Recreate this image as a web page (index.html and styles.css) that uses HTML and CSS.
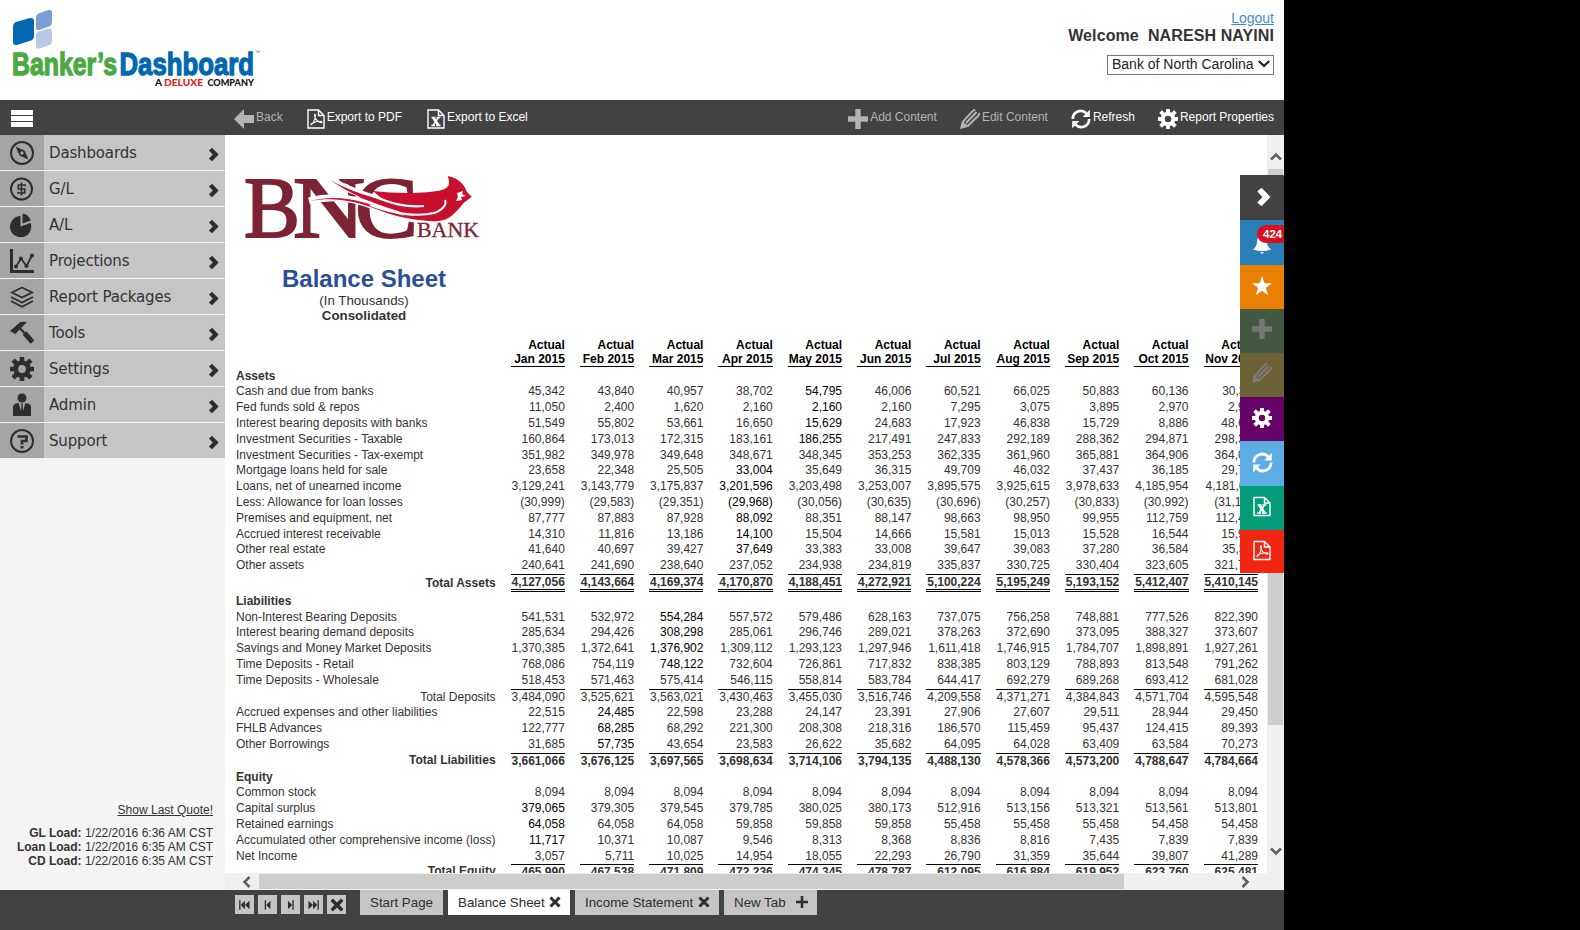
FILE: index.html
```html
<!DOCTYPE html>
<html lang="en">
<head>
<meta charset="utf-8">
<title>Banker's Dashboard</title>
<link rel="stylesheet" href="styles.css">
</head>
<body>
<svg class="defs" aria-hidden="true">
  <symbol id="chev" viewBox="0 0 12 16"><path d="M1 3.6 4.4.6 11.6 8 4.4 15.4 1 12.4 5.2 8Z" fill="currentColor"/></symbol>
  <symbol id="gear" viewBox="-12 -12 24 24"><circle r="6.3" fill="none" stroke="currentColor" stroke-width="4.800"/><path d="M0-12V-7M0 7V12M-12 0H-7M7 0H12M-8.9-8.9-5.5-5.5M8.9-8.9 5.5-5.5M-8.9 8.9-5.5 5.5M8.9 8.9 5.5 5.5" stroke="currentColor" stroke-width="4.600"/></symbol>
  <symbol id="refresh" viewBox="0 0 24 24"><path d="M2.2 12A9.4 9.4 0 0 1 18.5 5.4M21.8 12A9.4 9.4 0 0 1 5.5 18.6" fill="none" stroke="currentColor" stroke-width="3.200"/><path d="M22.600 1V9.600H14ZM1.400 23V14.400H10Z" fill="currentColor"/></symbol>
  <symbol id="xls" viewBox="0 0 18 20"><path d="M1 1H11.5L17 6.5V19H1ZM11.5 1V6.5H17" fill="none" stroke="currentColor" stroke-width="1.400"/><path d="M4.500 8.500H8.500M9.500 8.500H13.300M4.300 16.500H8M9 16.500H13.600" stroke="currentColor" stroke-width="1.300"/><path d="M6.200 8.500 11.600 16.500" stroke="currentColor" stroke-width="2.800"/><path d="M11.600 8.500 6 16.500" stroke="currentColor" stroke-width="1.500"/></symbol>
  <symbol id="pdf" viewBox="0 0 18 20"><path d="M1 1H11.5L17 6.5V19H1ZM11.500 1V6.500H17" fill="none" stroke="currentColor" stroke-width="1.400"/><path d="M3.500 16.300C6 15.500 8.600 10 8.400 6.200 8.300 4.600 7.200 5 7.500 6.800 8 10 11 13.400 14.300 13.600 15.500 13.500 15 12.200 13.500 12.200 10 12.200 6 13.600 3.800 15.300" fill="none" stroke="currentColor" stroke-width="1.100"/></symbol>
  <symbol id="plus" viewBox="0 0 20 20"><path d="M7.300 0H12.700V7.300H20V12.700H12.700V20H7.300V12.700H0V7.300H7.300Z" fill="currentColor"/></symbol>
  <symbol id="pencil" viewBox="0 0 20 20"><path d="M0 20 1.800 12.200 4 12.500 5 15 7.300 15.600 7.800 18Z" fill="currentColor"/><path d="M2.800 12.800 12 2.600Q13.500 1 15.300 1M6 14 16.600 3M7.500 17.300 18 7Q19.300 5.500 19 4" fill="none" stroke="currentColor" stroke-width="2"/></symbol>
  <symbol id="cross" viewBox="0 0 12 12"><path d="M1.500 1.500 10.500 10.500M10.500 1.500 1.500 10.500" stroke="currentColor" stroke-width="3"/></symbol>
</svg>

<div class="app">
  <header class="header">
    <svg class="logo" width="270" height="90" viewBox="0 0 270 90">
      <path d="M16 22 30 18Q34 17.500 34 21V36Q34 39 31 40.500L17 45Q13 45.500 13 42V27Q13 23 16 22Z" fill="#0067b2"/>
      <path d="M38.500 13.500 48.500 10Q52 9.500 52 12.500V22Q52 25 49.500 26.200L39.500 30Q36 30.500 36 27.500V17Q36 14.500 38.500 13.500Z" fill="#7c9dd2"/>
      <path d="M38.500 31.500 48.500 28.500Q52 28 52 31V41Q52 44 49.500 45L39.500 48.500Q36 49 36 46V35Q36 32.500 38.500 31.500Z" fill="#b8c9e6"/>
      <text class="logo-word logo-green" x="12" y="74.500" textLength="105" lengthAdjust="spacingAndGlyphs">Banker’s</text>
      <text class="logo-word logo-blue" x="119.500" y="74.500" textLength="134.500" lengthAdjust="spacingAndGlyphs">Dashboard</text>
      <text class="logo-tm" x="255" y="54">™</text>
      <text class="logo-sub" x="155" y="86" textLength="7" lengthAdjust="spacingAndGlyphs">A</text>
      <text class="logo-sub logo-red" x="164" y="86" textLength="39" lengthAdjust="spacingAndGlyphs">DELUXE</text>
      <text class="logo-sub" x="207.500" y="86" textLength="46.500" lengthAdjust="spacingAndGlyphs">COMPANY</text>
    </svg>
    <div class="account">
      <a class="logout">Logout</a>
      <div class="welcome">Welcome&nbsp; NARESH NAYINI</div>
      <div class="bank"><span>Bank of North Carolina</span><svg width="12" height="8" viewBox="0 0 12 8"><path d="M.8 1 6 6 11.200 1" fill="none" stroke="#222" stroke-width="2.200"/></svg></div>
    </div>
  </header>

  <div class="toolbar">
    <svg class="burger" width="22" height="18" viewBox="0 0 22 18"><path d="M0 0H22V5H0ZM0 6H22V11H0ZM0 12H22V17H0Z" fill="#fff"/></svg>
    <div class="tools-left">
      <span class="tool off back"><svg width="20" height="20" viewBox="0 0 20 20"><path d="M0 10 10 0V6H20V14H10V20Z" fill="currentColor"/></svg>Back</span>
      <span class="tool pdf"><svg width="18" height="20"><use href="#pdf"/></svg>Export to PDF</span>
      <span class="tool xls"><svg width="18" height="20"><use href="#xls"/></svg>Export to Excel</span>
    </div>
    <div class="tools-right">
      <span class="tool off"><svg width="20" height="20"><use href="#plus"/></svg>Add Content</span>
      <span class="tool off"><svg width="20" height="20"><use href="#pencil"/></svg>Edit Content</span>
      <span class="tool"><svg width="20" height="20"><use href="#refresh"/></svg>Refresh</span>
      <span class="tool"><svg width="20" height="20"><use href="#gear"/></svg>Report Properties</span>
    </div>
  </div>

  <div class="main">
    <nav class="sidebar">
      <ul class="menu">
        <li><span class="ico"><svg width="24" height="24" viewBox="0 0 24 24"><circle cx="12" cy="12" r="11" fill="none" stroke="currentColor" stroke-width="2"/><path d="M5.500 5.500 14.500 9.500 18.500 18.500 9.500 14.500Z" fill="currentColor"/><circle cx="12" cy="12" r="1.700" fill="#a5a5a5"/></svg></span><b>Dashboards</b><svg class="arr" width="11" height="15"><use href="#chev"/></svg></li>
        <li><span class="ico"><svg width="24" height="24" viewBox="0 0 24 24"><circle cx="11.500" cy="12" r="10.500" fill="none" stroke="currentColor" stroke-width="2"/><path d="M15 9.300V8H8.300V12H14.700V16H8V14.700M11.500 5.500V18.500" fill="none" stroke="currentColor" stroke-width="1.600"/></svg></span><b>G/L</b><svg class="arr" width="11" height="15"><use href="#chev"/></svg></li>
        <li><span class="ico"><svg width="24" height="24" viewBox="0 0 24 24"><path d="M10.500 3V13.500L20.600 10A10.600 10.600 0 1 1 10.500 3Z" fill="currentColor"/><path d="M12.500.5Q18.500 1 20.600 7.500L12.500 10.500Z" fill="currentColor"/></svg></span><b>A/L</b><svg class="arr" width="11" height="15"><use href="#chev"/></svg></li>
        <li><span class="ico"><svg width="24" height="24" viewBox="0 0 24 24"><path d="M1.500 0V22.500H24" fill="none" stroke="currentColor" stroke-width="3"/><path d="M6 17.500 11 9.500 16.500 17 22 6.500" fill="none" stroke="currentColor" stroke-width="1.800"/><g fill="currentColor"><circle cx="6" cy="17.500" r="2"/><circle cx="11" cy="9.500" r="2"/><circle cx="16.500" cy="17" r="2"/><circle cx="22" cy="6.500" r="2"/></g></svg></span><b>Projections</b><svg class="arr" width="11" height="15"><use href="#chev"/></svg></li>
        <li><span class="ico"><svg width="24" height="24" viewBox="0 0 24 24"><path d="M12 2.500 22 7.500 12 12.500 2 7.500ZM1 12 12 17.500 23 12M1 16 12 21.800 23 16" fill="none" stroke="currentColor" stroke-width="1.900"/></svg></span><b>Report Packages</b><svg class="arr" width="11" height="15"><use href="#chev"/></svg></li>
        <li><span class="ico"><svg width="24" height="24" viewBox="0 0 24 24"><path d="M0 10 10 1.200Q13 .2 17 1L12.500 5.500 9.500 8.500 5.500 13Z" fill="currentColor"/><path d="M9 6.500 16 13.500" stroke="currentColor" stroke-width="2.400"/><path d="M14.500 12 22.500 21" stroke="currentColor" stroke-width="5"/></svg></span><b>Tools</b><svg class="arr" width="11" height="15"><use href="#chev"/></svg></li>
        <li><span class="ico"><svg width="24" height="24"><use href="#gear"/></svg></span><b>Settings</b><svg class="arr" width="11" height="15"><use href="#chev"/></svg></li>
        <li><span class="ico"><svg width="24" height="24" viewBox="0 0 24 24"><circle cx="12" cy="5" r="4.500" fill="currentColor"/><path d="M3 23V14Q3 10.500 8.500 10L11 18 11.400 12 10.800 10.500H13.200L12.600 12 13 18 15.500 10Q21 10.500 21 14V23Z" fill="currentColor"/></svg></span><b>Admin</b><svg class="arr" width="11" height="15"><use href="#chev"/></svg></li>
        <li><span class="ico"><svg width="24" height="24" viewBox="0 0 24 24"><circle cx="12" cy="12" r="11" fill="none" stroke="currentColor" stroke-width="2"/><path d="M7.500 7.500H16.500V12H12V15.500" fill="none" stroke="currentColor" stroke-width="2.600"/><path d="M10.500 17H13.500V19.500H10.500Z" fill="currentColor"/></svg></span><b>Support</b><svg class="arr" width="11" height="15"><use href="#chev"/></svg></li>
      </ul>
      <div class="loads">
        <a class="quote">Show Last Quote!</a>
        <div><strong>GL Load:</strong> 1/22/2016 6:36 AM CST</div>
        <div><strong>Loan Load:</strong> 1/22/2016 6:35 AM CST</div>
        <div><strong>CD Load:</strong> 1/22/2016 6:35 AM CST</div>
      </div>
    </nav>

    <section class="view">
      <div class="report">
        <svg class="bnc" width="240" height="68" viewBox="0 0 240 68">
          <text class="bnc-big" x="0" y="63.500" textLength="56" lengthAdjust="spacingAndGlyphs">B</text>
          <text class="bnc-big" x="49" y="63.500" textLength="72" lengthAdjust="spacingAndGlyphs">N</text>
          <text class="bnc-big" x="111" y="63.500" textLength="63" lengthAdjust="spacingAndGlyphs">C</text>
          <path d="M86 7C108 19 128 25 150 31 170 39 190 38 201 27M65 28C95 20 118 28 140 37 156 43 172 49 194 47" fill="none" stroke="#fff" stroke-width="7"/>
          <path d="M129 18C150 20.500 182 21 198 17 204 15 207 12 203.700 3 214 5 221 12 222.700 18.700L227.700 23.700 219.300 30.300C212 40 204 48 194 48 184 49 172 47 158 42L150 32C142 28 135 24 129 18Z" fill="#c8102e"/>
          <path d="M86 7C108 19 126 24 150 30 170 37 184 39 192 34L186 41C164 43 146 36 128 29 112 23 98 15 86 7Z" fill="#c8102e"/>
          <path d="M65 28C95 21 116 27 142 37 158 43 172 46 186 46 174 49 152 44 132 36 108 27 90 24 65 28Z" fill="#c8102e"/>
          <path d="M129 23C146 30 162 35 180 33M126 32C150 41 174 44 190 40 199 37 203 31 201 27" fill="none" stroke="#fff" stroke-width="2.200"/>
          <path d="M213 20 219 18 218 21 222 23 217 24 218 27 212 28 214 24Z" fill="#fff"/>
          <text class="bnc-small" x="173" y="64" textLength="62" lengthAdjust="spacingAndGlyphs">BANK</text>
        </svg>
        <div class="titles">
          <h1>Balance Sheet</h1>
          <div class="unit">(In Thousands)</div>
          <div class="scope">Consolidated</div>
        </div>
        <table class="sheet">
          <thead>
            <tr class="h1"><th></th><th>Actual</th><th>Actual</th><th>Actual</th><th>Actual</th><th>Actual</th><th>Actual</th><th>Actual</th><th>Actual</th><th>Actual</th><th>Actual</th><th>Actual</th></tr>
            <tr class="h2"><th></th><th>Jan 2015</th><th>Feb 2015</th><th>Mar 2015</th><th>Apr 2015</th><th>May 2015</th><th>Jun 2015</th><th>Jul 2015</th><th>Aug 2015</th><th>Sep 2015</th><th>Oct 2015</th><th>Nov 2015</th></tr>
          </thead>
          <tbody>
            <tr class="group"><th>Assets</th></tr>
            <tr><th>Cash and due from banks</th><td>45,342</td><td>43,840</td><td>40,957</td><td>38,702</td><td class="k">54,795</td><td>46,006</td><td>60,521</td><td>66,025</td><td>50,883</td><td>60,136</td><td>30,311</td></tr>
            <tr><th>Fed funds sold &amp; repos</th><td>11,050</td><td>2,400</td><td>1,620</td><td>2,160</td><td class="k">2,160</td><td>2,160</td><td>7,295</td><td>3,075</td><td>3,895</td><td>2,970</td><td>2,915</td></tr>
            <tr><th>Interest bearing deposits with banks</th><td>51,549</td><td>55,802</td><td>53,661</td><td>16,650</td><td class="k">15,629</td><td>24,683</td><td>17,923</td><td>46,838</td><td>15,729</td><td>8,886</td><td>48,621</td></tr>
            <tr><th>Investment Securities - Taxable</th><td>160,864</td><td>173,013</td><td>172,315</td><td>183,161</td><td class="k">186,255</td><td>217,491</td><td>247,833</td><td>292,189</td><td>288,362</td><td>294,871</td><td>298,314</td></tr>
            <tr class="r15"><th>Investment Securities - Tax-exempt</th><td>351,982</td><td>349,978</td><td>349,648</td><td>348,671</td><td>348,345</td><td>353,253</td><td>362,335</td><td>361,960</td><td>365,881</td><td>364,906</td><td>364,012</td></tr>
            <tr><th>Mortgage loans held for sale</th><td>23,658</td><td>22,348</td><td>25,505</td><td class="k">33,004</td><td>35,649</td><td>36,315</td><td>49,709</td><td>46,032</td><td>37,437</td><td>36,185</td><td>29,714</td></tr>
            <tr><th>Loans, net of unearned income</th><td>3,129,241</td><td>3,143,779</td><td>3,175,837</td><td class="k">3,201,596</td><td>3,203,498</td><td>3,253,007</td><td>3,895,575</td><td>3,925,615</td><td>3,978,633</td><td>4,185,954</td><td>4,181,611</td></tr>
            <tr><th>Less: Allowance for loan losses</th><td>(30,999)</td><td>(29,583)</td><td>(29,351)</td><td class="k">(29,968)</td><td>(30,056)</td><td>(30,635)</td><td>(30,696)</td><td>(30,257)</td><td>(30,833)</td><td>(30,992)</td><td>(31,110)</td></tr>
            <tr><th>Premises and equipment, net</th><td>87,777</td><td>87,883</td><td>87,928</td><td class="k">88,092</td><td>88,351</td><td>88,147</td><td>98,663</td><td>98,950</td><td>99,955</td><td>112,759</td><td>112,412</td></tr>
            <tr class="r15"><th>Accrued interest receivable</th><td>14,310</td><td>11,816</td><td>13,186</td><td class="k">14,100</td><td>15,504</td><td>14,666</td><td>15,581</td><td>15,013</td><td>15,528</td><td>16,544</td><td>15,914</td></tr>
            <tr><th>Other real estate</th><td>41,640</td><td>40,697</td><td>39,427</td><td class="k">37,649</td><td>33,383</td><td>33,008</td><td>39,647</td><td>39,083</td><td>37,280</td><td>36,584</td><td>35,311</td></tr>
            <tr class="r17"><th>Other assets</th><td>240,641</td><td>241,690</td><td>238,640</td><td>237,052</td><td>234,938</td><td>234,819</td><td>335,837</td><td>330,725</td><td>330,404</td><td>323,605</td><td>321,710</td></tr>
            <tr class="total grand"><th>Total Assets</th><td>4,127,056</td><td>4,143,664</td><td>4,169,374</td><td>4,170,870</td><td>4,188,451</td><td>4,272,921</td><td>5,100,224</td><td>5,195,249</td><td>5,193,152</td><td>5,412,407</td><td>5,410,145</td></tr>
            <tr class="group r17"><th>Liabilities</th></tr>
            <tr class="r15"><th>Non-Interest Bearing Deposits</th><td>541,531</td><td>532,972</td><td class="k">554,284</td><td>557,572</td><td>579,486</td><td>628,163</td><td>737,075</td><td>756,258</td><td>748,881</td><td>777,526</td><td>822,390</td></tr>
            <tr><th>Interest bearing demand deposits</th><td>285,634</td><td>294,426</td><td class="k">308,298</td><td>285,061</td><td>296,746</td><td>289,021</td><td>378,263</td><td>372,690</td><td>373,095</td><td>388,327</td><td>373,607</td></tr>
            <tr><th>Savings and Money Market Deposits</th><td>1,370,385</td><td>1,372,641</td><td class="k">1,376,902</td><td>1,309,112</td><td>1,293,123</td><td>1,297,946</td><td>1,611,418</td><td>1,746,915</td><td>1,784,707</td><td>1,898,891</td><td>1,927,261</td></tr>
            <tr><th>Time Deposits - Retail</th><td>768,086</td><td>754,119</td><td class="k">748,122</td><td>732,604</td><td>726,861</td><td>717,832</td><td>838,385</td><td>803,129</td><td>788,893</td><td>813,548</td><td>791,262</td></tr>
            <tr class="r17"><th>Time Deposits - Wholesale</th><td>518,453</td><td>571,463</td><td>575,414</td><td>546,115</td><td>558,814</td><td>583,784</td><td>644,417</td><td>692,279</td><td>689,268</td><td>693,412</td><td>681,028</td></tr>
            <tr class="total sub"><th>Total Deposits</th><td>3,484,090</td><td>3,525,621</td><td>3,563,021</td><td>3,430,463</td><td>3,455,030</td><td>3,516,746</td><td>4,209,558</td><td>4,371,271</td><td>4,384,843</td><td>4,571,704</td><td>4,595,548</td></tr>
            <tr><th>Accrued expenses and other liabilities</th><td>22,515</td><td class="k">24,485</td><td>22,598</td><td>23,288</td><td>24,147</td><td>23,391</td><td>27,906</td><td>27,607</td><td>29,511</td><td>28,944</td><td>29,450</td></tr>
            <tr><th>FHLB Advances</th><td>122,777</td><td class="k">68,285</td><td>68,292</td><td>221,300</td><td>208,308</td><td>218,316</td><td>186,570</td><td>115,459</td><td>95,437</td><td>124,415</td><td>89,393</td></tr>
            <tr class="r17"><th>Other Borrowings</th><td>31,685</td><td class="k">57,735</td><td>43,654</td><td>23,583</td><td>26,622</td><td>35,682</td><td>64,095</td><td>64,028</td><td>63,409</td><td>63,584</td><td>70,273</td></tr>
            <tr class="total liab"><th>Total Liabilities</th><td>3,661,066</td><td>3,676,125</td><td>3,697,565</td><td>3,698,634</td><td>3,714,106</td><td>3,794,135</td><td>4,488,130</td><td>4,578,366</td><td>4,573,200</td><td>4,788,647</td><td>4,784,664</td></tr>
            <tr class="group r15"><th>Equity</th></tr>
            <tr><th>Common stock</th><td>8,094</td><td>8,094</td><td>8,094</td><td>8,094</td><td>8,094</td><td>8,094</td><td>8,094</td><td>8,094</td><td>8,094</td><td>8,094</td><td>8,094</td></tr>
            <tr><th>Capital surplus</th><td class="k">379,065</td><td>379,305</td><td>379,545</td><td>379,785</td><td>380,025</td><td>380,173</td><td>512,916</td><td>513,156</td><td>513,321</td><td>513,561</td><td>513,801</td></tr>
            <tr><th>Retained earnings</th><td class="k">64,058</td><td>64,058</td><td>64,058</td><td>59,858</td><td>59,858</td><td>59,858</td><td>55,458</td><td>55,458</td><td>55,458</td><td>54,458</td><td>54,458</td></tr>
            <tr><th>Accumulated other comprehensive income (loss)</th><td class="k">11,717</td><td>10,371</td><td>10,087</td><td>9,546</td><td>8,313</td><td>8,368</td><td>8,836</td><td>8,816</td><td>7,435</td><td>7,839</td><td>7,839</td></tr>
            <tr><th>Net Income</th><td>3,057</td><td>5,711</td><td>10,025</td><td>14,954</td><td>18,055</td><td>22,293</td><td>26,790</td><td>31,359</td><td>35,644</td><td>39,807</td><td>41,289</td></tr>
            <tr class="total liab"><th>Total Equity</th><td>465,990</td><td>467,538</td><td>471,809</td><td>472,236</td><td>474,345</td><td>478,787</td><td>612,095</td><td>616,884</td><td>619,952</td><td>623,760</td><td>625,481</td></tr>
          </tbody>
        </table>
      </div>
      <div class="vscroll">
        <svg width="12" height="9" viewBox="0 0 12 9"><path d="M1 7.500 6 2.500 11 7.500" fill="none" stroke="#606060" stroke-width="2.600"/></svg>
        <div class="vthumb"></div>
        <svg class="down" width="12" height="9" viewBox="0 0 12 9"><path d="M1 1.500 6 6.500 11 1.500" fill="none" stroke="#606060" stroke-width="2.600"/></svg>
      </div>
      <div class="hscroll">
        <svg width="9" height="12" viewBox="0 0 9 12"><path d="M7.500 1 2.500 6 7.500 11" fill="none" stroke="#606060" stroke-width="2.600"/></svg>
        <div class="hthumb"></div>
        <svg class="right" width="9" height="12" viewBox="0 0 9 12"><path d="M1.500 1 6.500 6 1.500 11" fill="none" stroke="#606060" stroke-width="2.600"/></svg>
      </div>
      <aside class="dock">
        <div class="d-toggle"><svg width="15" height="20" viewBox="0 0 12 16"><use href="#chev"/></svg></div>
        <div class="d-bell"><svg width="20" height="20" viewBox="0 0 20 20"><path d="M10 1Q15 2 15 8 15 13 19 15.500 14 17 10 17 6 17 1 15.500 5 13 5 8 5 2 10 1ZM7.800 18.300H12.200L10 20Z" fill="currentColor"/></svg><span class="count">424</span></div>
        <div class="d-star"><svg width="20" height="20" viewBox="0 0 20 20"><path d="M10 0 12.400 7.200H20L13.900 11.800 16.200 19.200 10 14.700 3.800 19.200 6.100 11.800 0 7.200H7.600Z" fill="currentColor"/></svg></div>
        <div class="d-add"><svg width="20" height="20"><use href="#plus"/></svg></div>
        <div class="d-edit"><svg width="20" height="20"><use href="#pencil"/></svg></div>
        <div class="d-props"><svg width="20" height="20"><use href="#gear"/></svg></div>
        <div class="d-refresh"><svg width="21" height="21"><use href="#refresh"/></svg></div>
        <div class="d-xls"><svg width="18" height="21"><use href="#xls"/></svg></div>
        <div class="d-pdf"><svg width="18" height="21"><use href="#pdf"/></svg></div>
      </aside>
    </section>
  </div>

  <footer class="footer">
    <div class="pager">
      <span><svg width="11" height="10" viewBox="0 0 13 11"><path d="M1 0V11" stroke="currentColor" stroke-width="1.600"/><path d="M7 .5V10.500L2 5.500ZM12.500.5V10.500L7 5.500Z" fill="currentColor"/></svg></span>
      <span><svg width="11" height="10" viewBox="0 0 13 11"><path d="M4 0V11" stroke="currentColor" stroke-width="1.600"/><path d="M10 .5V10.500L5 5.500Z" fill="currentColor"/></svg></span>
      <span><svg width="11" height="10" viewBox="0 0 13 11"><path d="M9.500 0V11" stroke="currentColor" stroke-width="1.600"/><path d="M3.500.5V10.500L8.500 5.500Z" fill="currentColor"/></svg></span>
      <span><svg width="11" height="10" viewBox="0 0 13 11"><path d="M12 0V11" stroke="currentColor" stroke-width="1.600"/><path d="M6 .5V10.500L11 5.500ZM.5.5V10.500L6 5.500Z" fill="currentColor"/></svg></span>
      <span><svg width="14" height="14"><use href="#cross"/></svg></span>
    </div>
    <div class="tabs">
      <span class="tab t1">Start Page</span>
      <span class="tab t2 active">Balance Sheet<svg width="12" height="12"><use href="#cross"/></svg></span>
      <span class="tab t3">Income Statement<svg width="12" height="12"><use href="#cross"/></svg></span>
      <span class="tab t4">New Tab<svg width="12" height="12" viewBox="0 0 12 12"><path d="M6 0V12M0 6H12" stroke="currentColor" stroke-width="2.600"/></svg></span>
    </div>
  </footer>
</div>
</body>
</html>
```
FILE: styles.css
```css
* { box-sizing: border-box; }
body { margin: 0; background: #000; font-family: "Liberation Sans", Arial, sans-serif; font-size: 12px; color: #333; }
svg { display: block; flex: none; }
.defs { position: absolute; width: 0; height: 0; }
.app { width: 1284px; height: 930px; background: #fff; display: flex; flex-direction: column; overflow: hidden; }

.header { height: 100px; flex: none; display: flex; justify-content: space-between; padding-right: 10px; }
.logo-word { font-weight: bold; font-size: 32px; stroke-width: 1.300px; }
.logo-green { fill: #4aa942; stroke: #4aa942; }
.logo-blue { fill: #0067b2; stroke: #0067b2; }
.logo-tm { font-size: 5px; fill: #0067b2; }
.logo-sub { font-family: Lato, sans-serif; font-weight: 900; font-size: 8.500px; fill: #111; }
.logo-red { fill: #e1251b; }
.account { display: flex; flex-direction: column; align-items: flex-end; padding-top: 10px; }
.logout { font-size: 14px; line-height: 16px; color: #428bca; text-decoration: underline; }
.welcome { font-size: 16px; line-height: 20px; font-weight: bold; white-space: nowrap; letter-spacing: .1px; }
.bank { margin-top: 9px; width: 167px; height: 20px; border: 1px solid #777; display: flex; align-items: center; justify-content: space-between; padding: 0 3px 2px 4px; font-size: 14px; color: #222; white-space: nowrap; }

.toolbar { height: 35px; flex: none; background: #424242; color: #fff; display: flex; align-items: center; padding: 0 10px 0 11px; }
.burger { margin-top: 3px; }
.tools-left { display: flex; margin-left: 201px; flex: 1; }
.tools-right { display: flex; gap: 23px; }
.tool { display: flex; align-items: center; gap: 2px; line-height: 30px; padding-bottom: 2px; white-space: nowrap; }
.tool svg { margin-top: 4px; }
.tool.off { color: #b3b3b3; }
.tool.pdf { margin-left: 24px; }
.tool.xls { margin-left: 25px; }

.main { height: 755px; flex: none; display: flex; }
.sidebar { width: 225px; flex: none; background: #f4f4f4; display: flex; flex-direction: column; justify-content: space-between; }
.menu { list-style: none; margin: 0; padding: 0; }
.menu li { height: 36px; border-bottom: 1px solid #f4f4f4; background: #c5c5c5; display: flex; align-items: center; color: #2d2d2d; }
.menu b { font: 15px "DejaVu Sans", Verdana, sans-serif; letter-spacing: -.15px; flex: 1; padding-left: 5px; white-space: nowrap; color: #333; }
.ico { width: 44px; height: 35px; background: #a5a5a5; display: flex; align-items: center; justify-content: center; }
.arr { margin: 3px 6px 0 0; }
.loads { text-align: right; padding: 0 12px 22px 0; line-height: 14px; }
.quote { display: block; text-decoration: underline; margin-bottom: 9px; }

.view { flex: 1; display: grid; grid-template: 738px 17px / 1042px 17px; position: relative; }
.report { overflow: hidden; padding: 38px 0 0 11px; }
.bnc { margin-left: 8px; }
.bnc-big { font-family: "Liberation Serif", serif; font-size: 87px; fill: #7d2333; stroke: #7d2333; stroke-width: 2px; }
.bnc-small { font-family: "Liberation Serif", serif; font-size: 20px; fill: #7d2333; stroke: #7d2333; stroke-width: .3px; }
.titles { width: 256px; text-align: center; font-size: 13.333px; line-height: 15px; padding-top: 23px; }
.titles h1 { margin: 0; font-size: 24px; line-height: 29px; color: #2a4f94; }
.scope { font-weight: bold; }
.sheet { table-layout: fixed; width: 1052px; margin: 15px 0 0 -15px; border-collapse: separate; border-spacing: 15px 0; white-space: nowrap; line-height: 14px; }
.sheet th, .sheet td { padding: 0; text-align: right; height: 16px; vertical-align: middle; width: 54.300px; }
.sheet th:first-child { width: 259.500px; text-align: left; font-weight: normal; }
.sheet thead th { color: #000; }
.sheet .h1 th { height: 14px; }
.sheet .h2 th { height: 15px; }
.sheet .h2 th:not(:first-child) { border-bottom: 1px solid #000; }
.sheet .r15 > * { height: 15px; }
.sheet .r17 > * { height: 17px; vertical-align: top; padding-top: 1px; }
.sheet .group th:first-child { font-weight: bold; padding-top: 2px; }
.sheet .group.r15 th:first-child { padding-top: 1px; }
.sheet .total td { border-top: 1px solid #000; font-weight: bold; }
.sheet .total th:first-child { text-align: right; font-weight: bold; }
.sheet .liab > * { vertical-align: top; }
.sheet .sub > td, .sheet .sub > th { height: 15px; }
.sheet .sub td, .sheet .sub th:first-child { font-weight: normal; }
.sheet .grand > * { height: 18px; }
.sheet .grand td { border-bottom: 3px double #000; }
.sheet .k { color: #000; }

.vscroll { background: #f0f0f0; display: flex; flex-direction: column; align-items: center; padding: 17px 0 17px; }
.vthumb { width: 15px; height: 556px; background: #cdcdcd; margin-top: 8px; }
.down { margin-top: auto; }
.hscroll { grid-column: 1 / 3; background: #f0f0f0; display: flex; align-items: center; padding: 0 34px 0 17px; }
.hthumb { width: 865px; height: 15px; background: #cdcdcd; margin-left: 8px; }
.right { margin-left: auto; }

.dock { position: absolute; top: 40px; right: 0; width: 44px; color: #fff; overflow: hidden; }
.dock div { height: 44px; display: flex; align-items: center; justify-content: center; position: relative; }
.dock .d-toggle { height: 45px; background: #424242; padding: 0 0 2px 3px; }
.dock .d-bell { height: 45px; background: #2980b9; padding-top: 2px; }
.d-star { background: #e98003; padding-bottom: 2px; }
.d-add { background: #43593f; color: #777; padding-bottom: 4px; }
.d-edit { background: #6d6235; color: #7b7b7b; padding-bottom: 4px; }
.d-props { background: #640268; padding-bottom: 2px; }
.dock .d-refresh { height: 45px; background: #5dade5; padding-bottom: 3px; }
.d-xls { background: #049c78; padding-bottom: 3px; }
.dock .d-pdf { height: 43px; background: #f32711; padding-bottom: 3px; }
.count { position: absolute; left: 17px; top: 5px; width: 32px; height: 18px; border-radius: 9px; background: #dd0d1c; font-weight: bold; line-height: 18px; padding-left: 6px; font-size: 11.500px; }

.footer { flex: 1; background: #424242; display: flex; align-items: flex-start; padding-left: 235px; }
.pager { display: flex; gap: 4px; padding-top: 5px; color: #2d2d2d; width: 125px; }
.pager span { width: 19px; height: 19px; background: #c5c5c5; display: flex; align-items: center; justify-content: center; }
.tabs { display: flex; gap: 5px; font-size: 13.333px; }
.tab { height: 25px; background: #c5c5c5; display: flex; align-items: center; justify-content: space-between; padding: 0 9px 1px 10px; white-space: nowrap; color: #2d2d2d; }
.t1 { width: 83px; }
.t2 { width: 122px; }
.t3 { width: 144px; }
.t4 { width: 93px; }
.tab.active { background: #fff; }
```
